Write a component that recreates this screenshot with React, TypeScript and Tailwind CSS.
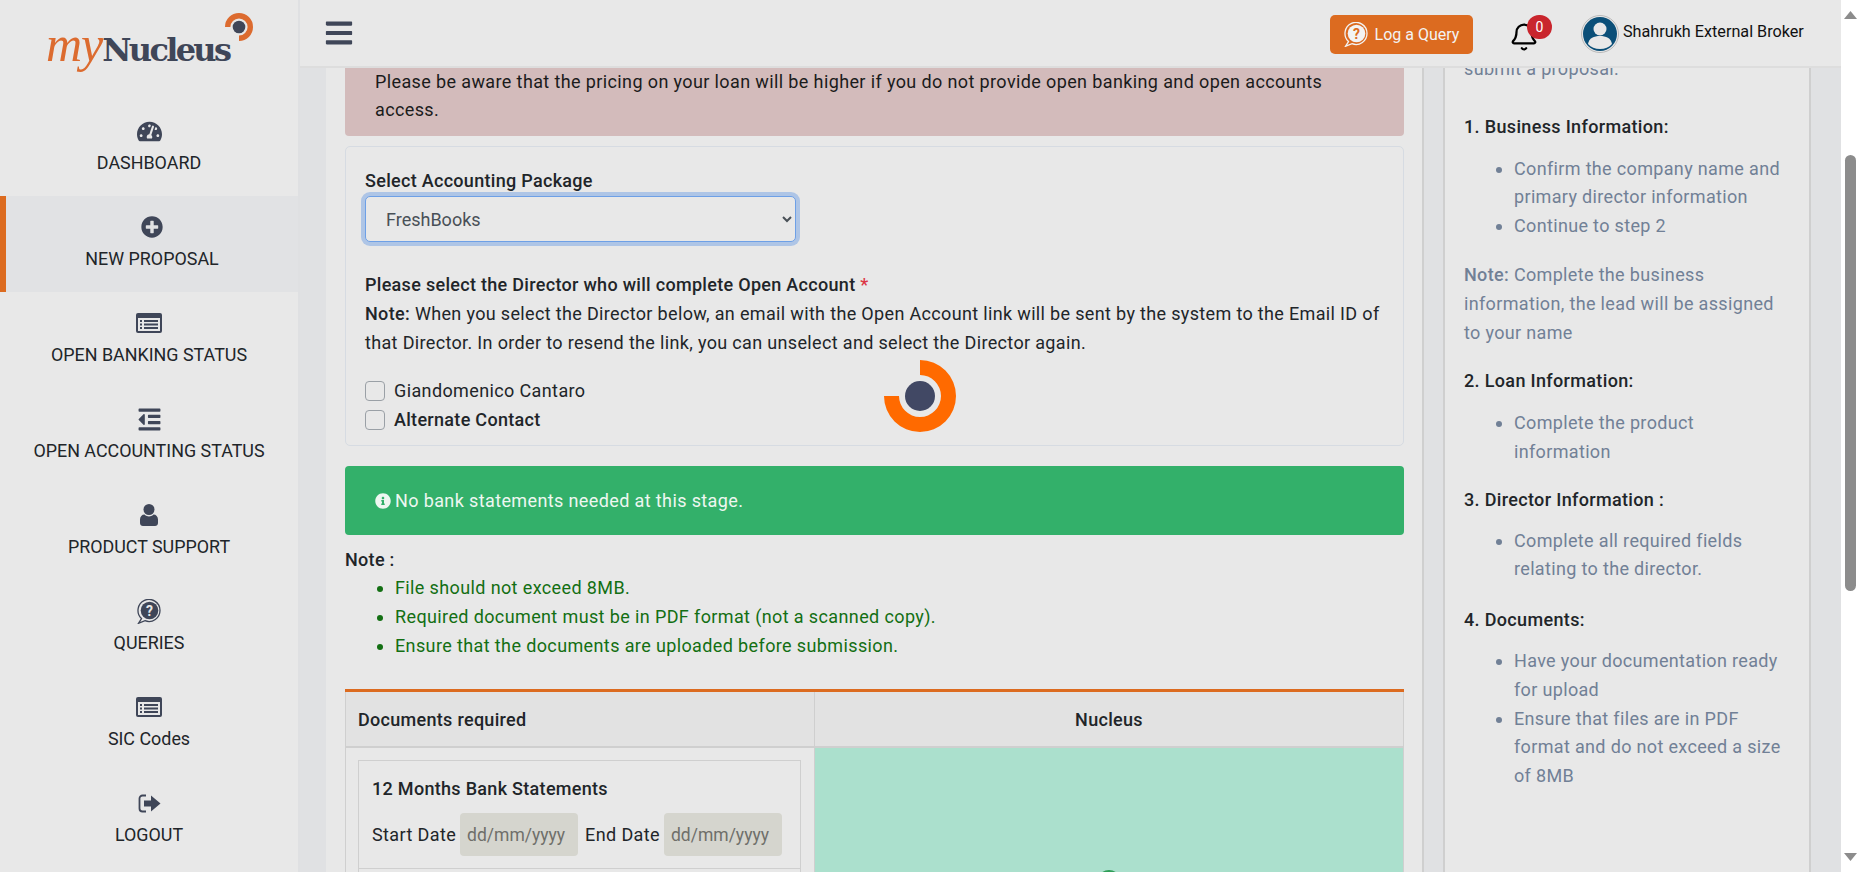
import { FaBars, FaInfoCircle, FaOutdent, FaPlusCircle, FaTachometerAlt } from 'react-icons/fa';
import { Bell } from 'lucide-react';

const dark = '#3f4658';

function ListAltIcon() {
  return (
    <svg width="26" height="20" viewBox="0 0 26 20">
      <rect x="0" y="0" width="26" height="20" rx="2" fill={dark} />
      <rect x="2" y="5" width="22" height="13" fill="#e8e8e8" />
      <rect x="4" y="7" width="2" height="2" fill={dark} />
      <rect x="4" y="10.5" width="2" height="2" fill={dark} />
      <rect x="4" y="14" width="2" height="2" fill={dark} />
      <rect x="8" y="7" width="14" height="2" fill={dark} />
      <rect x="8" y="10.5" width="14" height="2" fill={dark} />
      <rect x="8" y="14" width="14" height="2" fill={dark} />
    </svg>
  );
}

function UserIcon() {
  return (
    <svg width="18" height="22" viewBox="0 0 18 22">
      <circle cx="9" cy="5.5" r="5.5" fill={dark} />
      <path d="M0 15.5C0 12.5 2 10.5 4.5 10.5 6 12 7.4 12.4 9 12.4s3-.4 4.5-1.9c2.5 0 4.5 2 4.5 5V19c0 1.7-1.3 3-3 3H3c-1.7 0-3-1.3-3-3z" fill={dark} />
    </svg>
  );
}

function QueryIcon({ color = dark, fill = dark, mark = '#e8e8e8', size = 25 }: { color?: string; fill?: string; mark?: string; size?: number }) {
  return (
    <svg width={size} height={size} viewBox="0 0 25 25">
      <path d="M4.5 19.5A11 11 0 1 1 8 21.7L1.5 24.3z" fill="none" stroke={color} strokeWidth="1.3" />
      <circle cx="12.5" cy="11.5" r="8.8" fill={fill} />
      <text x="12.5" y="16.5" textAnchor="middle" fontSize="14" fontWeight="700" fill={mark} fontFamily="Roboto, sans-serif">?</text>
    </svg>
  );
}

function LogoutIcon() {
  return (
    <svg width="23" height="19" viewBox="0 0 23 19">
      <path d="M8 1.5H4.5A3 3 0 0 0 1.5 4.5v10a3 3 0 0 0 3 3H8" fill="none" stroke={dark} strokeWidth="1.8" />
      <path d="M6 6.5h7V1.5l9.5 8-9.5 8v-5H6z" fill={dark} />
    </svg>
  );
}

function Avatar() {
  return (
    <svg width="38" height="38" viewBox="0 0 38 38">
      <circle cx="19" cy="19" r="18.5" fill="#e8e8e8" stroke="#b9b9b9" />
      <circle cx="19" cy="19" r="17" fill="#0b4f78" />
      <circle cx="19" cy="14" r="6.5" fill="#e8e8e8" />
      <path d="M7 29c1-6 6-8 12-8s11 2 12 8c-3 3.5-7 5-12 5s-9-1.5-12-5z" fill="#e8e8e8" />
    </svg>
  );
}

function LogoMark() {
  return (
    <svg width="30" height="30" viewBox="0 0 30 30">
      <path d="M1 15A14 14 0 1 1 15 29V23.6A8.6 8.6 0 1 0 6.4 15z" fill="#dc6b2f" />
      <circle cx="15" cy="15" r="6.3" fill={dark} />
    </svg>
  );
}

function Spinner() {
  return (
    <svg width="72" height="72" viewBox="0 0 72 72">
      <path d="M36 0A36 36 0 1 1 0 36H15A21 21 0 1 0 36 15z" fill="#ff6a00" />
      <circle cx="36" cy="36" r="15" fill="#414864" />
    </svg>
  );
}

const navItems = [
  { label: 'DASHBOARD', icon: <FaTachometerAlt size={25} color={dark} /> },
  { label: 'NEW PROPOSAL', icon: <FaPlusCircle size={22} color={dark} />, active: true },
  { label: 'OPEN BANKING STATUS', icon: <ListAltIcon /> },
  { label: 'OPEN ACCOUNTING STATUS', icon: <FaOutdent size={25} color={dark} /> },
  { label: 'PRODUCT SUPPORT', icon: <UserIcon /> },
  { label: 'QUERIES', icon: <QueryIcon /> },
  { label: 'SIC Codes', icon: <ListAltIcon /> },
  { label: 'LOGOUT', icon: <LogoutIcon /> },
];

function Sidebar() {
  return (
    <aside className="w-[300px] shrink-0 h-full bg-[#e8e8e8] border-r-2 border-[#dfe0e2] overflow-hidden">
      <div className="h-[100px] pt-[12px] pl-[46px]">
        <div className="flex items-start">
          <div className="flex items-baseline mt-[8px]">
            <span className="text-[50px] leading-[48px] italic text-[#dc6b2f] font-['Liberation_Serif',serif] tracking-[-1px]">my</span>
            <span className="text-[32px] leading-[48px] font-bold text-[#3f4658] font-['DejaVu_Serif',serif] tracking-[-2.7px]">Nucleus</span>
          </div>
          <div className="-ml-[5px]">
            <LogoMark />
          </div>
        </div>
      </div>
      {navItems.map((item) => (
        <div
          key={item.label}
          className={
            item.active
              ? 'h-[96px] bg-[#e1e2e4] border-l-[6px] border-[#dc6b20] flex flex-col items-center pt-[17px]'
              : 'h-[96px] flex flex-col items-center pt-[17px]'
          }
        >
          <div className="h-[28px] flex items-center justify-center">{item.icon}</div>
          <div className="mt-[6px] text-[17.9px] leading-[24px] text-[#212529] whitespace-nowrap">{item.label}</div>
        </div>
      ))}
    </aside>
  );
}

function Topbar() {
  return (
    <header className="h-[68px] shrink-0 bg-[#e8e8e8] border-b-2 border-[#dddddd] flex items-center pl-[24px]">
      <FaBars size={30} color={dark} />
      <div className="ml-auto flex items-start h-full pt-[15px]">
        <button className="w-[143px] h-[39px] rounded-[5px] bg-[#dc6b20] text-[#f3f3f3] text-[16px] flex items-center justify-center gap-[6px]">
          <QueryIcon color="#f3f3f3" fill="#f3f3f3" mark="#dc6b20" />
          Log a Query
        </button>
        <div className="ml-[38px] relative w-[30px] pt-[7px]">
          <Bell size={30} color="#000000" strokeWidth={1.8} className="-ml-[2px]" />
          <span className="absolute left-[16px] top-0 w-[25px] h-[24px] rounded-full bg-[#c9252d] text-white text-[14px] flex items-center justify-center">0</span>
        </div>
        <div className="ml-[40px]">
          <Avatar />
        </div>
        <div className="ml-[4px] w-[218px] text-[16.2px] leading-[34px] text-[#111111] whitespace-nowrap">Shahrukh External Broker</div>
      </div>
    </header>
  );
}

function GuideList({ items }: { items: string[] }) {
  return (
    <ul className="list-disc pl-[50px] text-[#718096] marker:text-[#718096]">
      {items.map((t) => (
        <li key={t}>{t}</li>
      ))}
    </ul>
  );
}

function GuidePanel() {
  return (
    <div className="ml-[19px] w-[368px] shrink-0 h-full bg-[#e8e8e8] border-x-2 border-[#cfcfcf] overflow-hidden">
      <div className="pl-[19px] pr-[24px] text-[18px] tracking-[0.34px] leading-[28.8px] -mt-[13px]">
        <p className="text-[#718096]">submit a proposal.</p>
        <h3 className="mt-[29px] font-medium text-[#212529]">1. Business Information:</h3>
        <div className="mt-[13px]">
          <GuideList items={['Confirm the company name and primary director information', 'Continue to step 2']} />
        </div>
        <p className="mt-[20px] text-[#718096]">
          <span className="font-medium">Note:</span> Complete the business information, the lead will be assigned to your name
        </p>
        <h3 className="mt-[20px] font-medium text-[#212529]">2. Loan Information:</h3>
        <div className="mt-[13px]">
          <GuideList items={['Complete the product information']} />
        </div>
        <h3 className="mt-[19px] font-medium text-[#212529]">3. Director Information :</h3>
        <div className="mt-[12px]">
          <GuideList items={['Complete all required fields relating to the director.']} />
        </div>
        <h3 className="mt-[22px] font-medium text-[#212529]">4. Documents:</h3>
        <div className="mt-[12px]">
          <GuideList
            items={[
              'Have your documentation ready for upload',
              'Ensure that files are in PDF format and do not exceed a size of 8MB',
            ]}
          />
        </div>
      </div>
    </div>
  );
}

function DateInput() {
  return (
    <input
      placeholder="dd/mm/yyyy"
      readOnly
      className="h-[43px] w-[118px] rounded-[4px] bg-[#d5d5ce] px-[7px] text-[17.5px] tracking-normal placeholder:text-[#6f6f6a]"
    />
  );
}

function MainPanel() {
  return (
    <div className="w-[1098px] shrink-0 ml-[26px] h-full bg-[#e8e8e8] border-r-2 border-[#cfcfcf] pl-[19px] pr-[18px] overflow-hidden text-[18px] tracking-[0.38px] leading-[29px] text-[#212529]">
      {/* open banking warning */}
      <div className="h-[68px] bg-[#d3bbbb] rounded-b-[4px] px-[30px] leading-[28px] text-[#1b1b1b]">
        Please be aware that the pricing on your loan will be higher if you do not provide open banking and open accounts access.
      </div>

      <div className="relative mt-[10px] h-[300px] border border-[#d6dbe2] rounded-[5px] px-[19px] pt-[19px]">
        <div className="font-medium tracking-[0.3px]">Select Accounting Package</div>
        <select className="mt-[1px] block w-[431px] h-[46px] rounded-[5px] border border-[#6ea0e6] ring-4 ring-[#aec5e6] pl-[16px] pr-[4px] tracking-normal text-[#495057] bg-[#e8e8e8]">
          <option>FreshBooks</option>
        </select>
        <div className="mt-[28px] font-medium tracking-[0.3px]">
          Please select the Director who will complete Open Account <span className="text-[#dc3545]">*</span>
        </div>
        <div className="tracking-[0.34px]">
          <span className="font-medium">Note:</span> When you select the Director below, an email with the Open Account link will be sent by the system to the Email ID of that Director. In order to resend the link, you can unselect and select the Director again.
        </div>
        <div className="mt-[19px] flex items-center gap-[9px] h-[29px]">
          <span className="w-[20px] h-[20px] rounded-[4px] border border-[#9aa0a6]"></span>
          <span>Giandomenico Cantaro</span>
        </div>
        <div className="flex items-center gap-[9px] h-[29px] font-medium tracking-[0.3px]">
          <span className="w-[20px] h-[20px] rounded-[4px] border border-[#9aa0a6]"></span>
          <span>Alternate Contact</span>
        </div>
        <div className="absolute left-[538px] top-[213px]">
          <Spinner />
        </div>
      </div>

      <div className="mt-[20px] h-[69px] rounded-[4px] bg-[#33b06a] text-[#eef7f1] flex items-center gap-[4px] pl-[30px]">
        <FaInfoCircle size={16} color="#eef7f1" />
        No bank statements needed at this stage.
      </div>

      <div className="mt-[10px] font-medium tracking-[0.3px]">Note :</div>
      <ul className="-mt-[1px] list-disc pl-[50px] text-[#136f13] marker:text-[#136f13]">
        <li>File should not exceed 8MB.</li>
        <li>Required document must be in PDF format (not a scanned copy).</li>
        <li>Ensure that the documents are uploaded before submission.</li>
      </ul>

      <div className="mt-[29px] border-t-[3px] border-[#dc6b20]">
        <div className="grid grid-cols-[469px_1fr] border-x border-[#cfcfcf]">
          <div className="h-[56px] bg-[#e2e2e2] border-r border-b-2 border-[#cfcfcf] flex items-center pl-[12px] font-medium tracking-[0.3px]">Documents required</div>
          <div className="h-[56px] bg-[#e2e2e2] border-b-2 border-[#cfcfcf] flex items-center justify-center font-medium tracking-[0.3px]">Nucleus</div>
          <div className="border-r border-[#cfcfcf] pl-[12px] pr-[13px] pt-[12px] h-[200px]">
            <div className="border border-[#cfcfcf] px-[13px] h-[180px]">
              <div className="pt-[13px] font-medium tracking-[0.3px]">12 Months Bank Statements</div>
              <div className="mt-[10px] flex items-center gap-[4px]">
                <span>Start Date</span>
                <DateInput />
                <span className="ml-[3px]">End Date</span>
                <DateInput />
              </div>
              <div className="mt-[12px] border-t border-[#cfcfcf] -mx-[13px]"></div>
            </div>
          </div>
          <div className="bg-[#abe0cd] h-[200px] flex justify-center pt-[122px]">
            <span className="w-[24px] h-[24px] rounded-full border-2 border-[#2f9e58]"></span>
          </div>
        </div>
      </div>
    </div>
  );
}

function Scrollbar() {
  return (
    <div className="w-[19px] shrink-0 h-full bg-white flex flex-col items-center">
      <svg width="13" height="8" viewBox="0 0 13 8" className="mt-[11px]">
        <path d="M6.5 0L13 8H0z" fill="#8c8c8c" />
      </svg>
      <div className="mt-[136px] w-[11px] h-[436px] rounded-full bg-[#8c8c8c]"></div>
      <svg width="13" height="8" viewBox="0 0 13 8" className="mt-auto mb-[11px]">
        <path d="M0 0h13L6.5 8z" fill="#8c8c8c" />
      </svg>
    </div>
  );
}

export default function App() {
  return (
    <div className="h-screen w-full flex overflow-hidden font-['Roboto',sans-serif] bg-[#e0e1e3]">
      <Sidebar />
      <div className="flex-1 min-w-0 flex flex-col h-full">
        <Topbar />
        <div className="flex-1 min-h-0 flex overflow-hidden">
          <MainPanel />
          <GuidePanel />
        </div>
      </div>
      <Scrollbar />
    </div>
  );
}
